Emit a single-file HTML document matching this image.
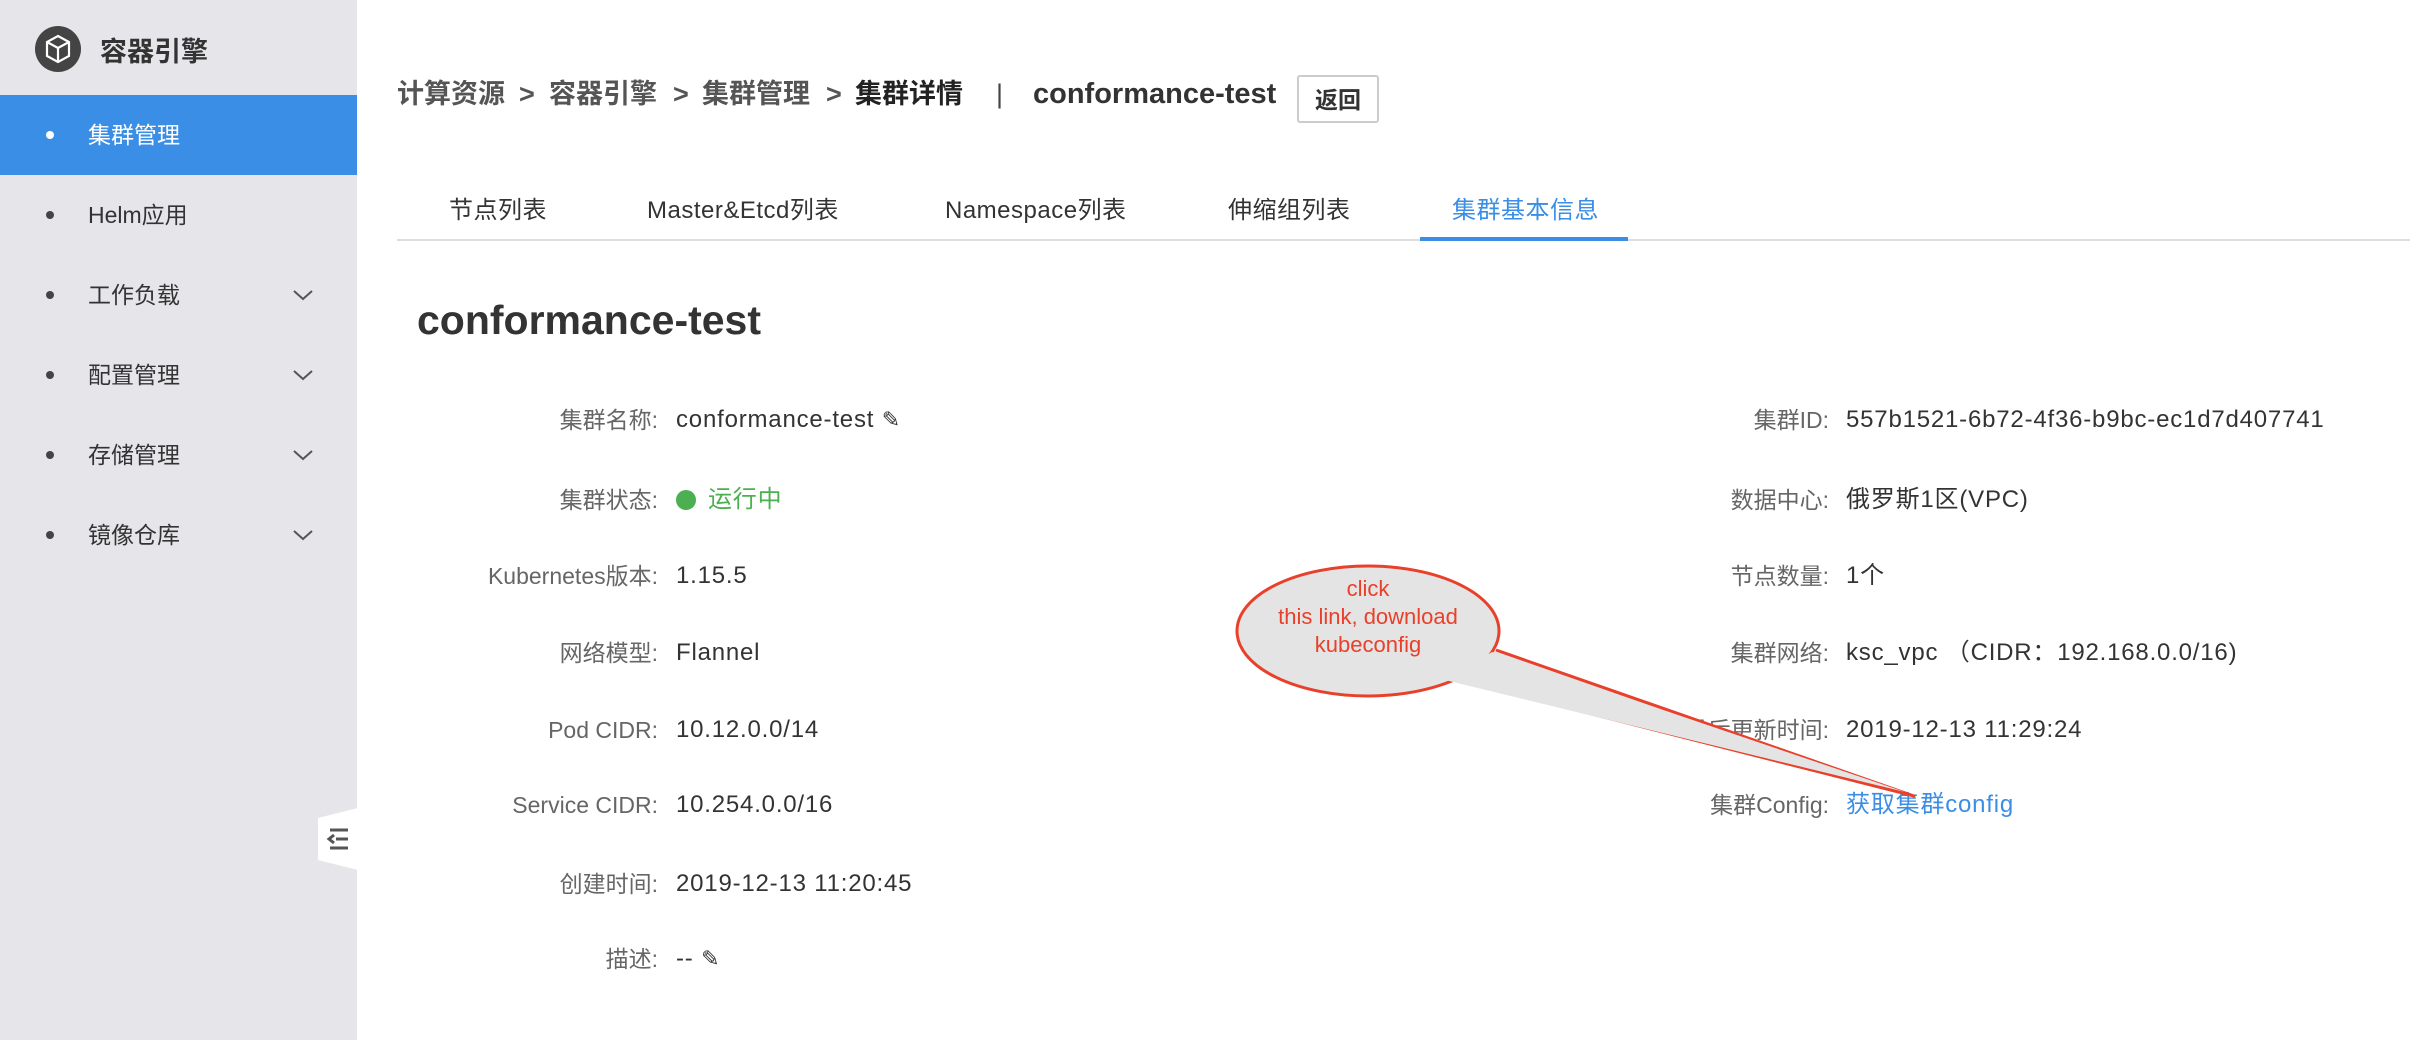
<!DOCTYPE html>
<html><head><meta charset="utf-8"><style>
*{margin:0;padding:0;box-sizing:border-box}
body{width:2410px;height:1040px;background:#fff;font-family:"Liberation Sans","Noto Sans CJK SC",sans-serif;position:relative;overflow:hidden;color:#333}
.sb{position:absolute;left:0;top:0;width:357px;height:1040px;background:#e6e6ea}
.abs{position:absolute;white-space:nowrap}
.item{position:absolute;left:0;width:357px;height:80px;font-size:23px;color:#333;line-height:80px}
.item .dot{position:absolute;left:46px;top:36px;width:8px;height:8px;border-radius:50%;background:#444}
.item .t{position:absolute;left:88px}
.item .chev{position:absolute;left:292px;top:30px}
.lab{position:absolute;font-size:23px;line-height:34px;color:#666;text-align:right;white-space:nowrap}
.val{position:absolute;font-size:24px;line-height:34px;letter-spacing:0.8px;color:#333;white-space:nowrap}
.tab{position:absolute;top:190px;font-size:24px;letter-spacing:0.5px;color:#333;white-space:nowrap}
.bc{position:absolute;top:76px;font-size:27px;line-height:36px;font-weight:bold;color:#555;white-space:nowrap}
</style></head><body>
<div class="sb">
  <svg class="abs" style="left:34px;top:25px" width="48" height="48" viewBox="0 0 48 48"><circle cx="24" cy="24" r="23" fill="#444"/><path d="M24 11 L35 17 L35 31 L24 37 L13 31 L13 17 Z M13 17 L24 23 L35 17 M24 23 L24 37" fill="none" stroke="#fff" stroke-width="2.2"/></svg>
  <div class="abs" style="left:100px;top:30px;font-size:27px;font-weight:bold;color:#333">容器引擎</div>
  <div class="item" style="top:95px;background:#3a8ee6;color:#fff"><span class="dot" style="background:#fff"></span><span class="t">集群管理</span></div>
  <div class="item" style="top:175px"><span class="dot"></span><span class="t">Helm应用</span></div>
  <div class="item" style="top:255px"><span class="dot"></span><span class="t">工作负载</span><svg class="chev" width="22" height="20"><path d="M2 6 L11 14 L20 6" fill="none" stroke="#555" stroke-width="2"/></svg></div>
  <div class="item" style="top:335px"><span class="dot"></span><span class="t">配置管理</span><svg class="chev" width="22" height="20"><path d="M2 6 L11 14 L20 6" fill="none" stroke="#555" stroke-width="2"/></svg></div>
  <div class="item" style="top:415px"><span class="dot"></span><span class="t">存储管理</span><svg class="chev" width="22" height="20"><path d="M2 6 L11 14 L20 6" fill="none" stroke="#555" stroke-width="2"/></svg></div>
  <div class="item" style="top:495px"><span class="dot"></span><span class="t">镜像仓库</span><svg class="chev" width="22" height="20"><path d="M2 6 L11 14 L20 6" fill="none" stroke="#555" stroke-width="2"/></svg></div>
  <svg class="abs" style="left:318px;top:808px" width="40" height="62"><path d="M40 0 L40 62 L0 52 L0 10 Z" fill="#fff"/><path d="M12 22 H30 M18 31 H30 M12 40 H30 M16 27 L11 31 L16 35" stroke="#555" stroke-width="3" fill="none"/></svg>
</div>

<div class="bc" style="left:397px">计算资源</div>
<div class="bc" style="left:519px">&gt;</div>
<div class="bc" style="left:549px">容器引擎</div>
<div class="bc" style="left:673px">&gt;</div>
<div class="bc" style="left:702px">集群管理</div>
<div class="bc" style="left:826px">&gt;</div>
<div class="bc" style="left:855px;color:#222">集群详情</div>
<div class="bc" style="left:996px;font-weight:normal;color:#444">|</div>
<div class="bc" style="left:1033px;color:#333;font-size:29px">conformance-test</div>
<div class="abs" style="left:1297px;top:75px;width:82px;height:48px;border:2px solid #ccc;border-radius:3px;font-size:23px;font-weight:bold;color:#333;text-align:center;line-height:46px">返回</div>

<div class="tab" style="left:449px">节点列表</div>
<div class="tab" style="left:647px">Master&amp;Etcd列表</div>
<div class="tab" style="left:945px">Namespace列表</div>
<div class="tab" style="left:1228px">伸缩组列表</div>
<div class="tab" style="left:1452px;color:#3a8ee6">集群基本信息</div>
<div class="abs" style="left:397px;top:239px;width:2013px;height:2px;background:#ddd"></div>
<div class="abs" style="left:1420px;top:237px;width:208px;height:4px;background:#3a8ee6"></div>

<div class="abs" style="left:417px;top:297px;font-size:41px;font-weight:bold;color:#333">conformance-test</div>

<div class="lab" style="right:1752px;top:403px">集群名称:</div><div class="val" style="left:676px;top:403px">conformance-test <span style="font-size:22px">✎</span></div>
<div class="lab" style="right:1752px;top:483px">集群状态:</div><div class="val" style="left:676px;top:483px;color:#4caf50"><span style="display:inline-block;width:20px;height:20px;border-radius:50%;background:#4caf50;vertical-align:-3px;margin-right:12px"></span>运行中</div>
<div class="lab" style="right:1752px;top:559px">Kubernetes版本:</div><div class="val" style="left:676px;top:559px">1.15.5</div>
<div class="lab" style="right:1752px;top:636px">网络模型:</div><div class="val" style="left:676px;top:636px">Flannel</div>
<div class="lab" style="right:1752px;top:713px">Pod CIDR:</div><div class="val" style="left:676px;top:713px">10.12.0.0/14</div>
<div class="lab" style="right:1752px;top:788px">Service CIDR:</div><div class="val" style="left:676px;top:788px">10.254.0.0/16</div>
<div class="lab" style="right:1752px;top:867px">创建时间:</div><div class="val" style="left:676px;top:867px">2019-12-13 11:20:45</div>
<div class="lab" style="right:1752px;top:942px">描述:</div><div class="val" style="left:676px;top:942px">-- <span style="font-size:22px">✎</span></div>

<div class="lab" style="right:581px;top:403px">集群ID:</div><div class="val" style="left:1846px;top:403px">557b1521-6b72-4f36-b9bc-ec1d7d407741</div>
<div class="lab" style="right:581px;top:483px">数据中心:</div><div class="val" style="left:1846px;top:483px">俄罗斯1区(VPC)</div>
<div class="lab" style="right:581px;top:559px">节点数量:</div><div class="val" style="left:1846px;top:559px">1个</div>
<div class="lab" style="right:581px;top:636px">集群网络:</div><div class="val" style="left:1846px;top:636px">ksc_vpc （CIDR：192.168.0.0/16)</div>
<div class="lab" style="right:581px;top:713px">最后更新时间:</div><div class="val" style="left:1846px;top:713px">2019-12-13 11:29:24</div>
<div class="lab" style="right:581px;top:788px">集群Config:</div><div class="val" style="left:1846px;top:788px;color:#3a8ee6">获取集群config</div>

<svg class="abs" style="left:0;top:0" width="2410" height="1040">
  <path d="M1450 678 L1914 796 L1496 650" fill="#e4e4e4" stroke="#e8402a" stroke-width="3" stroke-linejoin="round"/>
  <ellipse cx="1368" cy="631" rx="131" ry="65" fill="#e4e4e4" stroke="#e8402a" stroke-width="3"/>
  <path d="M1445 680 L1905 792 L1492 652 Z" fill="#e4e4e4"/>
</svg>
<div class="abs" style="left:1238px;top:575px;width:260px;text-align:center;font-size:22px;line-height:28px;color:#e8402a;white-space:normal">click<br>this link, download<br>kubeconfig</div>
</body></html>
